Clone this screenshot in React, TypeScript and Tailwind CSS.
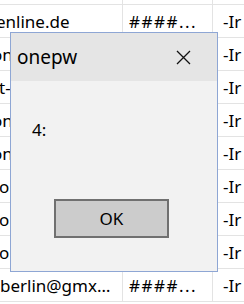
import React from "react";

const rows = [
  { a: "enline.de", off: "-ml-[4px]", b: "####...", c: "-Ir" },
  { a: "online.de", off: "-ml-[8px]", b: "####...", c: "-Ir" },
  { a: "t-online.de", off: "-ml-[1px]", b: "####...", c: "-Ir" },
  { a: "online.de", off: "-ml-[8px]", b: "####...", c: "-Ir" },
  { a: "online.de", off: "-ml-[8px]", b: "####...", c: "-Ir" },
  { a: "or.de", off: "-ml-[1px]", b: "####...", c: "-Ir" },
  { a: "or.de", off: "-ml-[1px]", b: "####...", c: "-Ir" },
  { a: "or.de", off: "-ml-[1px]", b: "####...", c: "-Ir" },
  { a: "berlin@gmx.de.info", off: "ml-[0px]", b: "####...", c: "-Ir" },
];

export default function App() {
  return (
    <div
      className="relative w-[244px] h-[304px] overflow-hidden bg-white text-black"
      style={{ fontFamily: '"Noto Sans", "Open Sans", sans-serif' }}
    >
      {/* sheet behind the dialog */}
      <div className="flex flex-col">
        <div className="grid grid-cols-[123px_90px_1fr] h-[5px] border-b border-[#e3e3e3]">
          <div className="border-r border-[#e3e3e3]" />
          <div className="border-r border-[#e3e3e3]" />
          <div />
        </div>
        {rows.map((r, i) => (
          <div
            key={i}
            className="grid grid-cols-[123px_90px_1fr] h-[33px] border-b border-[#e3e3e3] text-[17px] leading-[33px]"
          >
            <div className="border-r border-[#e3e3e3] overflow-hidden whitespace-nowrap pr-[10px]">
              <div className={`${r.off} truncate`}>{r.a}</div>
            </div>
            <div className="border-r border-[#e3e3e3] pl-[6px] whitespace-nowrap overflow-hidden tracking-[1.5px]">
              {r.b}
            </div>
            <div className="pl-[10px] whitespace-nowrap overflow-hidden">{r.c}</div>
          </div>
        ))}
      </div>

      {/* message box */}
      <div className="absolute left-[10px] top-[32px] w-[208px] h-[240px] border border-[#8ea6d4] bg-[#f2f2f2] flex flex-col">
        <div className="h-[48px] bg-[#e5e5e5] flex items-center justify-between pl-[6px] pr-[26px]">
          <span className="text-[19px]">onepw</span>
          <svg width="15" height="15" viewBox="0 0 15 15" fill="none" stroke="#111" strokeWidth="1.3">
            <path d="M1 1 L14 14 M14 1 L1 14" />
          </svg>
        </div>
        <div className="flex-1 flex flex-col">
          <div className="pl-[21px] pt-[38px] text-[17px] leading-[22px]">4:</div>
          <div className="flex-1" />
          <div className="pl-[43px] pb-[33px]">
            <button className="w-[115px] h-[39px] border-2 border-[#707070] bg-[#cccccc] text-[17px] flex items-center justify-center">
              OK
            </button>
          </div>
        </div>
      </div>
    </div>
  );
}
